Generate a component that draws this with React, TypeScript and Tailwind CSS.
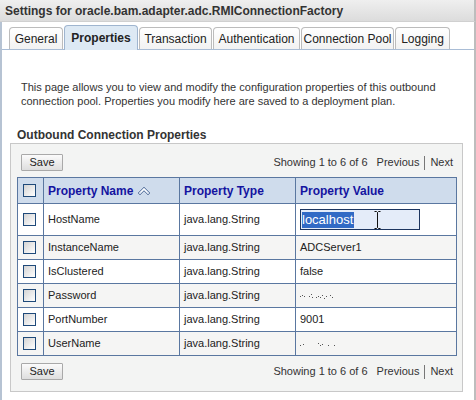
import React from "react";

const tabs = [
  { label: "General", w: "w-[54px]" },
  { label: "Properties", w: "w-[74px]", active: true },
  { label: "Transaction", w: "w-[73px]" },
  { label: "Authentication", w: "w-[87px]" },
  { label: "Connection Pool", w: "w-[93px]" },
  { label: "Logging", w: "w-[55px]" },
];

const rows = [
  { name: "HostName", type: "java.lang.String", value: "input" },
  { name: "InstanceName", type: "java.lang.String", value: "ADCServer1" },
  { name: "IsClustered", type: "java.lang.String", value: "false" },
  { name: "Password", type: "java.lang.String", value: "mask1" },
  { name: "PortNumber", type: "java.lang.String", value: "9001" },
  { name: "UserName", type: "java.lang.String", value: "mask2" },
];

function Checkbox() {
  return (
    <div className="w-[13px] h-[13px] border border-[#1f4a7a] bg-gradient-to-br from-[#d4d4d4] to-white" />
  );
}

function SortIcon() {
  return (
    <svg width="14" height="11" viewBox="0 0 14 11" className="inline-block ml-[4px] align-[-1px]">
      <path d="M1 8 L7 2 L13 8 L11 10 L7 6 L3 10 Z" fill="#c8d4e6" stroke="#6f86ab" strokeWidth="1" />
      <path d="M3.5 7.5 L7 4 L10.5 7.5" fill="none" stroke="#ffffff" strokeWidth="1" />
    </svg>
  );
}

function Mask({ kind }: { kind: string }) {
  const dots1 = [
    [0, 5], [2, 4], [4, 5], [9, 5], [11, 3], [12, 6], [16, 6], [18, 5], [20, 6], [22, 4], [24, 7], [26, 5], [30, 4], [32, 6],
  ];
  const dots2 = [
    [0, 6], [3, 5], [18, 4], [20, 6], [22, 5], [28, 6], [34, 6],
  ];
  const d = kind === "mask1" ? dots1 : dots2;
  return (
    <svg width="40" height="10" viewBox="0 0 40 10">
      {d.map(([x, y], i) => (
        <rect key={i} x={x} y={y} width="1" height="1" fill="#555" />
      ))}
    </svg>
  );
}

function Toolbar() {
  return (
    <div className="flex items-center justify-between pr-[9px]">
      <button className="w-[42px] h-[17px] border border-[#a9a9a9] bg-gradient-to-b from-[#fbfbfb] to-[#dedede] text-[11px] text-[#222] leading-none rounded-[1px]">
        Save
      </button>
      <div className="text-[11px] text-[#333] flex items-center">
        <span>Showing 1 to 6 of 6</span>
        <span className="ml-[9px]">Previous</span>
        <span className="mx-[5px] w-px h-[14px] bg-[#777]" />
        <span>Next</span>
      </div>
    </div>
  );
}

export default function App() {
  return (
    <div
      className="w-[476px] h-[400px] bg-white overflow-hidden flex flex-col"
      style={{ fontFamily: '"Liberation Sans", Arial, sans-serif' }}
    >
      <div className="h-[22px] shrink-0 bg-gradient-to-b from-[#efefef] to-[#dcdcdc] border-b border-[#d0d0d0] flex items-center pl-[5px] text-[12px] font-bold text-[#333] border-r-2 border-r-[#bdbdbd]">
        Settings for oracle.bam.adapter.adc.RMIConnectionFactory
      </div>
      <div className="flex-1 border-l-2 border-[#b6c3d3] border-r-2 border-r-[#bdbdbd] flex flex-col">
        <div className="h-[28px] pl-[7px] flex items-end gap-[1px] border-b border-[#a9bdd6]">
          {tabs.map((t) =>
            t.active ? (
              <div
                key={t.label}
                className={`${t.w} h-[25px] -mb-px rounded-t-[4px] border border-b-0 border-[#9fb5cf] bg-[#dde9f4] flex items-center justify-center text-[12px] font-bold text-[#222]`}
              >
                {t.label}
              </div>
            ) : (
              <div
                key={t.label}
                className={`${t.w} h-[22px] rounded-t-[4px] border border-b-0 border-[#bcbcbc] bg-gradient-to-b from-white to-[#f2f2f2] flex items-center justify-center text-[12px] text-[#222]`}
              >
                {t.label}
              </div>
            )
          )}
        </div>

        <p className="mt-[30px] pl-[19px] pr-[10px] text-[11px] leading-[14px] text-[#333]">
          This page allows you to view and modify the configuration properties of this outbound connection pool. Properties you modify here are saved to a deployment plan.
        </p>

        <div className="mt-[20px] pl-[15px] text-[12px] font-bold text-[#333] leading-[14px]">
          Outbound Connection Properties
        </div>

        <div className="mt-[1px] ml-[8px] w-[453px] h-[249px] border border-[#c8c8c8] bg-[#f3f4f3] pt-[10px] pl-[10px]">
          <Toolbar />
          <table className="mt-[6px] -ml-[4px] w-[439px] border-collapse table-fixed text-[11px] text-[#222]">
            <colgroup>
              <col className="w-[26px]" />
              <col className="w-[136px]" />
              <col className="w-[116px]" />
              <col className="w-[161px]" />
            </colgroup>
            <thead>
              <tr className="h-[26px] bg-[#cfdcec]">
                <th className="border border-[#5a77a0] pl-[5px] text-left">
                  <Checkbox />
                </th>
                <th className="border border-[#5a77a0] pl-[4px] text-left font-bold text-[#1414a0] text-[12px]">
                  Property Name
                  <SortIcon />
                </th>
                <th className="border border-[#5a77a0] pl-[4px] text-left font-bold text-[#1414a0] text-[12px]">
                  Property Type
                </th>
                <th className="border border-[#5a77a0] pl-[4px] text-left font-bold text-[#1414a0] text-[12px]">
                  Property Value
                </th>
              </tr>
            </thead>
            <tbody>
              {rows.map((r, i) => (
                <tr
                  key={r.name}
                  className={`${i === 0 ? "h-[32px]" : "h-[24px]"} ${i % 2 === 1 ? "bg-[#f5f5f4]" : "bg-white"}`}
                >
                  <td className="border border-[#5a77a0] pl-[5px]">
                    <Checkbox />
                  </td>
                  <td className="border border-[#5a77a0] pl-[4px]">{r.name}</td>
                  <td className="border border-[#5a77a0] pl-[4px]">{r.type}</td>
                  <td className="border border-[#5a77a0] pl-[4px]">
                    {r.value === "input" ? (
                      <div className="relative w-[120px] h-[21px] border border-[#1c3560] bg-[#e4ecf9] flex items-center pl-[1px]">
                        <span className="bg-[#316ac5] text-white text-[13px] leading-[16px] pr-[1px]">localhost</span>
                        <svg width="7" height="18" viewBox="0 0 7 18" className="absolute left-[73px] top-[1px]">
                          <path d="M0.5 0.5 H2.5 L3.5 1.5 L4.5 0.5 H6.5 M3.5 1.5 V16.5 M0.5 17.5 H2.5 L3.5 16.5 L4.5 17.5 H6.5" fill="none" stroke="#111" strokeWidth="1" />
                        </svg>
                      </div>
                    ) : r.value.startsWith("mask") ? (
                      <Mask kind={r.value} />
                    ) : (
                      r.value
                    )}
                  </td>
                </tr>
              ))}
            </tbody>
          </table>
          <div className="mt-[7px]">
            <Toolbar />
          </div>
        </div>
      </div>
    </div>
  );
}
